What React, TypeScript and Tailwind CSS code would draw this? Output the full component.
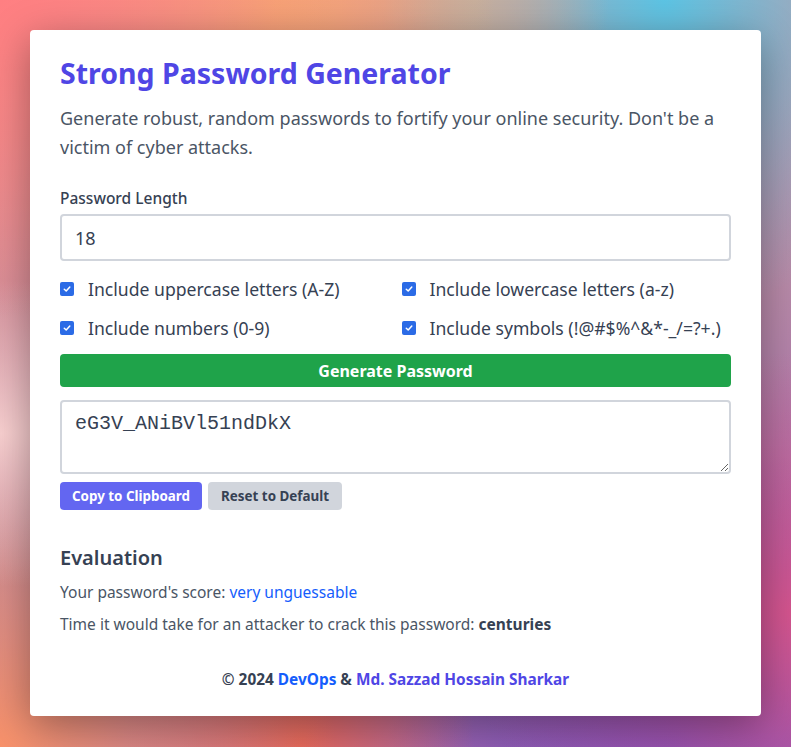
import React from "react";

function Check({ label }: { label: string }) {
  return (
    <label className="flex items-center gap-[14px] text-[17.6px] leading-6 text-gray-700">
      <span className="flex h-[14px] w-[14px] shrink-0 items-center justify-center rounded-[2px] bg-[#2b6be6]">
        <svg width="10" height="10" viewBox="0 0 10 10" fill="none">
          <path d="M2.3 5.2 L4.2 7 L7.8 3" stroke="white" strokeWidth="1.5" strokeLinecap="round" strokeLinejoin="round" />
        </svg>
      </span>
      <span>{label}</span>
    </label>
  );
}

export default function App() {
  return (
    <div
      className="min-h-[747px] w-full p-[30px] font-['Noto_Sans',sans-serif] bg-[radial-gradient(at_0%_0%,#ff7f82_0%,transparent_30%),radial-gradient(at_35%_0%,#f6a874_0%,transparent_30%),radial-gradient(at_60%_0%,#c4b0a0_0%,transparent_20%),radial-gradient(at_84%_0%,#5cc4e4_0%,transparent_30%),radial-gradient(at_0%_58%,#f9d0d0_0%,transparent_25%),radial-gradient(at_100%_82%,#d4548e_0%,transparent_30%),radial-gradient(at_0%_100%,#f8926a_0%,transparent_30%),radial-gradient(at_38%_100%,#e6665a_0%,transparent_25%),radial-gradient(at_85%_100%,#7250c0_0%,transparent_30%),linear-gradient(160deg,#f7968a_0%,#b88aa8_55%,#9a5ab0_100%)]"
    >
      <div className="flex flex-col rounded bg-white px-[30px] pt-[30px] pb-[24px] shadow-[0_10px_40px_rgba(0,0,0,0.35)]">
        <h1 className="text-[28.5px] font-bold leading-[26px] text-[#4f46e5]">Strong Password Generator</h1>
        <p className="mt-[18px] text-lg leading-[29px] text-gray-600">
          Generate robust, random passwords to fortify your online security. Don't be a victim of cyber attacks.
        </p>
        <div className="mt-6 text-[15.5px] leading-6 font-medium text-gray-700">Password Length</div>
        <input
          readOnly
          value="18"
          className="mt-1 h-[47px] w-full rounded border-2 border-gray-300 px-[13px] text-lg text-gray-700 outline-none"
        />
        <div className="mt-4 grid grid-cols-2 gap-x-3 gap-y-[15px]">
          <Check label="Include uppercase letters (A-Z)" />
          <Check label="Include lowercase letters (a-z)" />
          <Check label="Include numbers (0-9)" />
          <Check label="Include symbols (!@#$%^&*-_/=?+.)" />
        </div>
        <button className="mt-[14px] h-[33px] w-full rounded bg-[#1fa34a] text-base font-bold text-white">
          Generate Password
        </button>
        <textarea
          readOnly
          value="eG3V_ANiBVl51ndDkX"
          className="mt-[13px] h-[74px] w-full rounded border-2 border-gray-300 px-[13px] pt-2 font-['Liberation_Mono',monospace] text-xl leading-7 text-gray-700 outline-none"
        />
        <div className="mt-[8px] flex gap-[6px]">
          <button className="h-[28px] rounded bg-[#6366f1] px-[12px] text-[13.4px] font-bold text-white">Copy to Clipboard</button>
          <button className="h-[28px] rounded bg-gray-300 px-[13px] text-[13.4px] font-bold text-gray-700">Reset to Default</button>
        </div>
        <h2 className="mt-[34px] text-xl leading-7 font-semibold text-gray-700">Evaluation</h2>
        <p className="mt-2 text-[15.5px] leading-6 text-gray-600">
          Your password's score: <span className="text-blue-600">very unguessable</span>
        </p>
        <p className="mt-2 text-[15.5px] leading-6 text-gray-600">
          Time it would take for an attacker to crack this password: <span className="font-bold text-gray-700">centuries</span>
        </p>
        <footer className="mt-8 text-center text-[15.4px] leading-6 font-bold text-gray-700">
          © 2024 <span className="text-blue-600">DevOps</span> &amp;{" "}
          <span className="text-[#4f46e5]">Md. Sazzad Hossain Sharkar</span>
        </footer>
      </div>
    </div>
  );
}
